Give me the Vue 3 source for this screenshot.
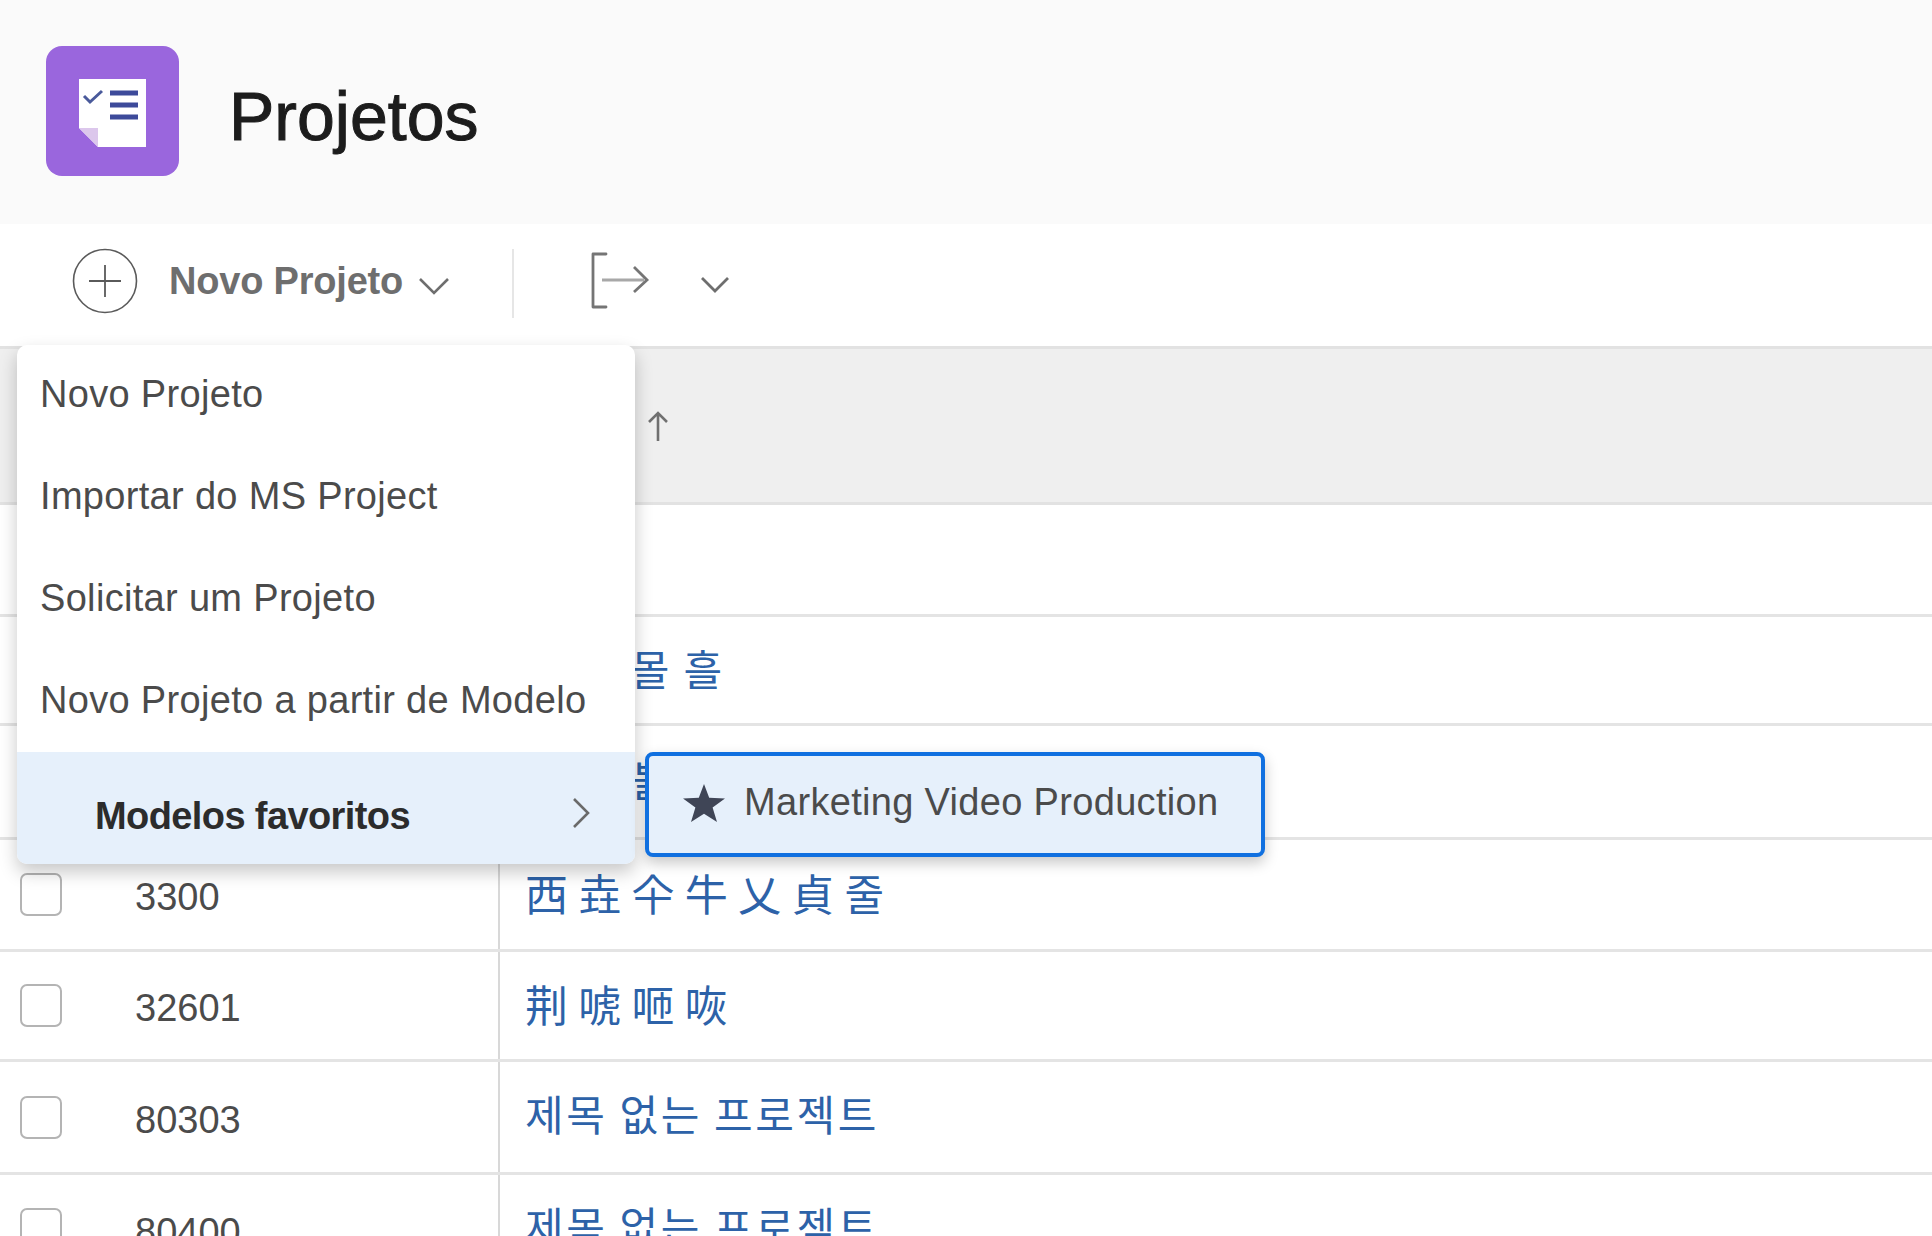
<script setup>
// linhas da tabela (altura medida em cada uma)
const rows = [
  { id: '', name: '', h: 112 },
  { id: '', name: '유 일 몰 흘', h: 109, wide: true },
  { id: '', name: '유 일 볼 흘', h: 114, wide: true },
  { id: '3300', name: '西 垚 仐 牛 乂 貞 줄', h: 112 },
  { id: '32601', name: '荆 唬 咂 咴', h: 110 },
  { id: '80303', name: '제목 없는 프로젝트', h: 113, ko: true },
  { id: '80400', name: '제목 없는 프로젝트', h: 112, ko: true }
]

const menuItems = [
  'Novo Projeto',
  'Importar do MS Project',
  'Solicitar um Projeto',
  'Novo Projeto a partir de Modelo'
]
</script>

<template>
  <div class="page">
    <header class="top">
      <svg class="app-icon" width="133" height="130" viewBox="0 0 133 130">
        <rect width="133" height="130" rx="16" fill="#9a66dd" />
        <path d="M33 33H100V101H52L33 82Z" fill="#fff" />
        <path d="M33 82H52V101Z" fill="#dcc7ec" />
        <path d="M38 50L44 56L56 45" fill="none" stroke="#4a5a9b" stroke-width="3" />
        <path d="M64 47H92M64 59H92M64 71H92" stroke="#3d4a9a" stroke-width="5" />
      </svg>
      <h1>Projetos</h1>
    </header>

    <div class="toolbar">
      <svg class="plus" width="66" height="66" viewBox="0 0 66 66">
        <circle cx="33" cy="33" r="31.5" fill="none" stroke="#5a5a5a" stroke-width="1.6" />
        <path d="M17 33H49M33 17V49" stroke="#5a5a5a" stroke-width="1.8" />
      </svg>
      <span class="new-label">Novo Projeto</span>
      <svg class="chev" width="32" height="18" viewBox="0 0 32 18">
        <path d="M2 2L16 16L30 2" fill="none" stroke="#6e6e6e" stroke-width="2.6" />
      </svg>
      <div class="divider"></div>
      <svg class="export" width="60" height="60" viewBox="0 0 60 60">
        <path d="M16 3H3V56H16" fill="none" stroke="#757575" stroke-width="2.8" stroke-linejoin="round" stroke-linecap="round" />
        <path d="M12 29H54" stroke="#a8a8a8" stroke-width="3.2" />
        <path d="M44 16L57 29L44 41" fill="none" stroke="#757575" stroke-width="2.8" />
      </svg>
      <svg class="chev2" width="30" height="17" viewBox="0 0 30 17">
        <path d="M2 2L15 15L28 2" fill="none" stroke="#6e6e6e" stroke-width="2.8" />
      </svg>
    </div>

    <div class="table-head">
      <svg width="22" height="32" viewBox="0 0 22 32">
        <path d="M11 31V3M2 12L11 3L20 12" fill="none" stroke="#707070" stroke-width="2.6" />
      </svg>
    </div>

    <div v-for="(row, i) in rows" :key="i" class="row" :style="{ height: row.h + 'px' }">
      <div class="cell-check"><span class="box"></span></div>
      <div class="cell-id">{{ row.id }}</div>
      <div class="cell-name" :class="{ ko: row.ko, wide: row.wide }">{{ row.name }}</div>
    </div>

    <div class="menu">
      <div v-for="item in menuItems" :key="item" class="menu-item">{{ item }}</div>
      <div class="menu-item active">
        <span>Modelos favoritos</span>
        <svg class="arrow" width="20" height="32" viewBox="0 0 20 32">
          <path d="M3 2L17 16L3 30" fill="none" stroke="#6a6a6a" stroke-width="2.6" />
        </svg>
      </div>
    </div>

    <div class="submenu">
      <svg width="44" height="40" viewBox="0 0 44 40">
        <path d="M22 1L27.2 14.8L43 15.4L30.6 24.6L35 39L22 30.8L9 39L13.4 24.6L1 15.4L16.8 14.8Z" fill="#3f4556" />
      </svg>
      <span>Marketing Video Production</span>
    </div>
  </div>
</template>

<style>
html, body {
  margin: 0;
  background: #fff;
  overflow: hidden;
}
</style>

<style scoped>
.page {
  position: relative;
  height: 1236px;
  overflow: hidden;
  background: #fff;
  font-family: "Liberation Sans", Arial, sans-serif;
  font-size: 38px;
}

/* Topo */
.top {
  height: 224px;
  box-sizing: border-box;
  padding-left: 46px;
  padding-bottom: 2px;
  background: #fafafa;
  display: flex;
  align-items: center;
}
h1 {
  margin: 9px 0 0 50px;
  font-size: 68px;
  font-weight: 400;
  color: #1c1c1c;
  -webkit-text-stroke: 1px #1c1c1c;
}

/* Barra de ferramentas */
.toolbar {
  height: 122px;
  box-sizing: border-box;
  padding-left: 72px;
  padding-bottom: 9px;
  display: flex;
  align-items: center;
}
.new-label {
  margin-left: 31px;
  margin-top: 2px;
  font-weight: 700;
  color: #6e6e6e;
  letter-spacing: -0.2px;
}
.chev {
  margin-left: 15px;
  margin-top: 10px;
}
.divider {
  width: 2px;
  height: 69px;
  margin-left: 62px;
  margin-top: 6px;
  background: #e6e6e6;
}
.export {
  margin-left: 76px;
}
.chev2 {
  margin-left: 50px;
  margin-top: 8px;
}

/* Tabela */
.table-head {
  height: 159px;
  box-sizing: border-box;
  padding-left: 647px;
  background: #efefef;
  border-top: 3px solid #e2e2e2;
  border-bottom: 3px solid #e2e2e2;
  display: flex;
  align-items: center;
}
.row {
  box-sizing: border-box;
  display: grid;
  grid-template-columns: 135px 365px 1fr;
  border-bottom: 3px solid #e4e4e4;
}
.cell-check {
  padding-left: 20px;
  display: flex;
  align-items: center;
}
.box {
  width: 42px;
  height: 43px;
  box-sizing: border-box;
  border: 2px solid #b4b4b4;
  border-radius: 7px;
  background: #fff;
}
.cell-id {
  padding-top: 6px;
  display: flex;
  align-items: center;
  color: #4b4b4b;
  border-right: 2px solid #d8d8d8;
}
.cell-name {
  padding-left: 25px;
  padding-bottom: 6px;
  display: flex;
  align-items: center;
  font-family: "Noto Sans CJK KR", "Noto Sans CJK SC", sans-serif;
  font-size: 43px;
  letter-spacing: 0.3px;
  color: #2d62a8;
  white-space: pre;
}
.ko {
  padding-bottom: 10px;
  font-size: 42px;
  letter-spacing: 2.6px;
}
.wide {
  font-size: 42px;
  letter-spacing: 2.4px;
}

/* Menu */
.menu {
  position: absolute;
  left: 17px;
  top: 345px;
  width: 618px;
  background: #fff;
  border-radius: 10px;
  overflow: hidden;
  box-shadow: 0 8px 18px rgba(0, 0, 0, 0.22);
}
.menu-item {
  height: 101.75px;
  box-sizing: border-box;
  padding-left: 23px;
  padding-bottom: 2px;
  display: flex;
  align-items: center;
  color: #4b4b4b;
  letter-spacing: 0.32px;
}
.menu-item.active {
  height: 112px;
  padding: 16px 44px 0 78px;
  justify-content: space-between;
  background: #e6f0fb;
  color: #2c2c2c;
  font-weight: 700;
  letter-spacing: -0.6px;
}
.arrow {
  margin-top: -6px;
}

.submenu {
  position: absolute;
  left: 645px;
  top: 752px;
  width: 620px;
  height: 105px;
  box-sizing: border-box;
  padding-left: 33px;
  padding-bottom: 4px;
  display: flex;
  align-items: center;
  gap: 18px;
  background: #e6f0fb;
  border: 4px solid #1070e0;
  border-radius: 8px;
  color: #4b4b4b;
  letter-spacing: 0.32px;
  box-shadow: 0 6px 14px rgba(0, 0, 0, 0.22);
}
</style>
